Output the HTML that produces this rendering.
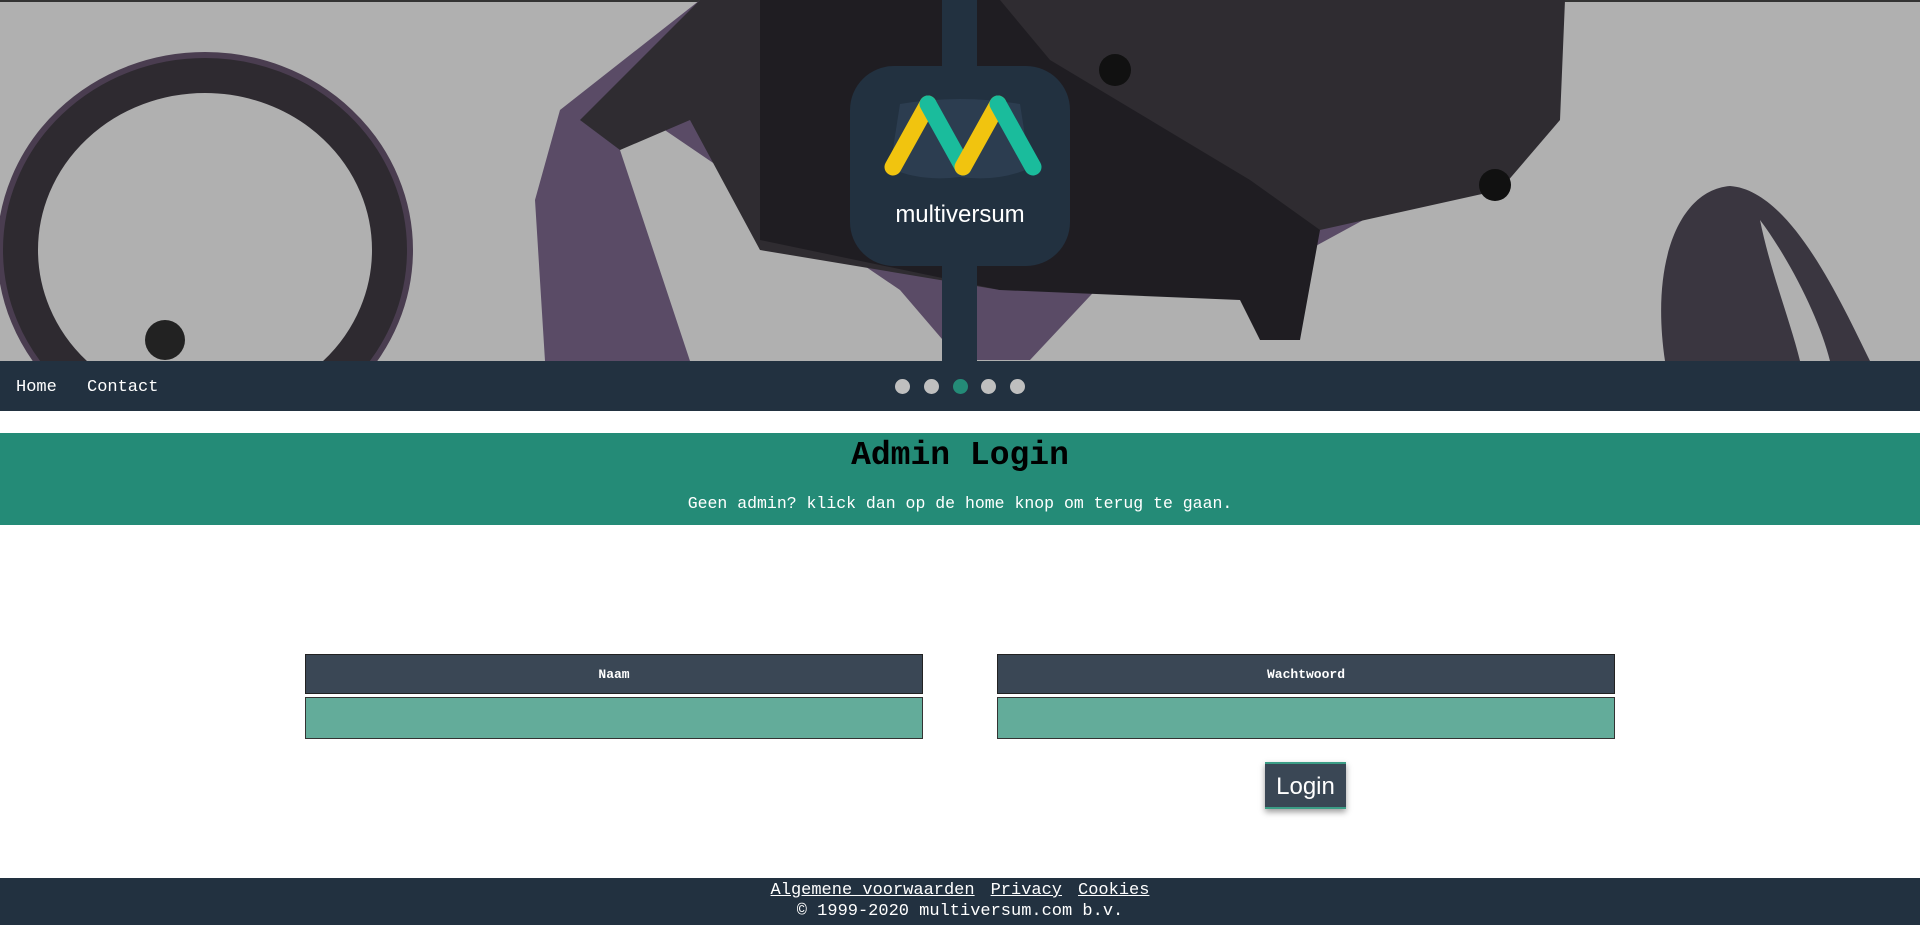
<!DOCTYPE html>
<html><head><meta charset="utf-8"><style>
*{margin:0;padding:0;box-sizing:border-box}
body{width:1920px;height:925px;overflow:hidden;background:#fff;font-family:"Liberation Mono",monospace;position:relative}
.hero{position:absolute;left:0;top:0;width:1920px;height:361px;background:#b0b0b0;overflow:hidden}
.nav{position:absolute;left:0;top:361px;width:1920px;height:50px;background:#223140}
.nav a{position:absolute;top:17px;color:#fff;font-size:17px;text-decoration:none}
.dot{position:absolute;top:379px;width:15px;height:15px;border-radius:50%;background:#bfbfbf}
.band{position:absolute;left:0;top:433px;width:1920px;height:92px;background:#248b77;text-align:center}
.band h1{position:absolute;left:0;right:0;top:3px;font-size:33px;font-weight:bold;color:#000;line-height:40px}
.band p{position:absolute;left:0;right:0;top:61px;font-size:16.5px;color:#fff}
.lbl{position:absolute;height:40px;background:#3a4755;border:1px solid #222;color:#fff;font-weight:bold;font-size:13px;text-align:center;line-height:40px}
.inp{position:absolute;height:42px;background:#63ac9a;border:1px solid #333}
.btn{position:absolute;left:1265px;top:762px;width:81px;height:47px;background:#3a4755;color:#fff;font-family:"Liberation Sans",sans-serif;font-size:24px;text-align:center;line-height:46px;border-top:2px solid #3b9d86;border-bottom:2px solid #3b9d86;box-shadow:0 3px 6px rgba(0,0,0,.4)}
.foot{position:absolute;left:0;top:878px;width:1920px;height:47px;background:#223140;color:#fff;text-align:center;font-size:17px;line-height:21px;padding-top:2px}
.foot a{color:#fff;text-decoration:underline;margin:0 8px}
</style></head><body>
<div class="hero">
<svg width="1920" height="361" viewBox="0 0 1920 361">
<rect x="0" y="0" width="1920" height="2" fill="#333"/>
<ellipse cx="205" cy="250" rx="185" ry="175" fill="none" stroke="#2e2a30" stroke-width="36"/>
<ellipse cx="205" cy="250" rx="205" ry="195" fill="none" stroke="#4a3d50" stroke-width="6"/>
<circle cx="165" cy="340" r="20" fill="#222"/>
<path d="M700 0 L560 110 L535 200 L545 361 L690 361 L620 150 L650 120 L900 290 L960 360 L1030 360 L1180 200 L1240 300 L1290 260 L1400 200 L1530 150 L1565 0 Z" fill="#5a4b66"/>
<path d="M700 0 L580 120 L620 150 L690 120 L760 250 L1000 290 L1320 230 L1500 190 L1560 120 L1565 0 Z" fill="#2f2c31"/>
<path d="M760 0 L760 240 L1000 290 L1240 300 L1260 340 L1300 340 L1320 230 L1250 180 L1050 60 L1000 0 Z" fill="#1f1d22"/>
<circle cx="1115" cy="70" r="16" fill="#111"/>
<circle cx="1495" cy="185" r="16" fill="#111"/>
<path d="M1665 361 C1650 260 1680 190 1730 186 C1790 190 1840 300 1870 361 Z" fill="#3a3640"/>
<path d="M1760 220 C1790 260 1820 320 1830 361 L1800 361 C1790 320 1770 270 1760 220 Z" fill="#b0b0b0"/>
<rect x="942" y="0" width="35" height="361" fill="#223140"/>
<rect x="850" y="66" width="220" height="200" rx="44" fill="#223140"/>
<path d="M900 104 Q960 94 1020 104 L1030 168 Q1000 182 960 177 Q920 182 890 168 Z" fill="#2c3d50"/>
<line x1="893" y1="167" x2="928" y2="104" stroke="#f1c40f" stroke-width="17" stroke-linecap="round"/>
<line x1="928" y1="104" x2="963" y2="167" stroke="#1abc9c" stroke-width="17" stroke-linecap="round"/>
<line x1="963" y1="167" x2="998" y2="104" stroke="#f1c40f" stroke-width="17" stroke-linecap="round"/>
<line x1="998" y1="104" x2="1033" y2="167" stroke="#1abc9c" stroke-width="17" stroke-linecap="round"/>
<text x="960" y="222" fill="#fff" font-family="Liberation Sans, sans-serif" font-size="24" text-anchor="middle">multiversum</text>
</svg>
</div>
<div class="nav"><a style="left:16px">Home</a><a style="left:87px">Contact</a></div>
<div class="dot" style="left:895px"></div>
<div class="dot" style="left:924px"></div>
<div class="dot" style="left:953px;background:#248b77"></div>
<div class="dot" style="left:981px"></div>
<div class="dot" style="left:1010px"></div>
<div class="band"><h1>Admin Login</h1><p>Geen admin? klick dan op de home knop om terug te gaan.</p></div>
<div class="lbl" style="left:305px;top:654px;width:618px">Naam</div>
<div class="inp" style="left:305px;top:697px;width:618px"></div>
<div class="lbl" style="left:997px;top:654px;width:618px">Wachtwoord</div>
<div class="inp" style="left:997px;top:697px;width:618px"></div>
<div class="btn">Login</div>
<div class="foot"><a>Algemene voorwaarden</a><a>Privacy</a><a>Cookies</a><br>© 1999-2020 multiversum.com b.v.</div>
</body></html>
